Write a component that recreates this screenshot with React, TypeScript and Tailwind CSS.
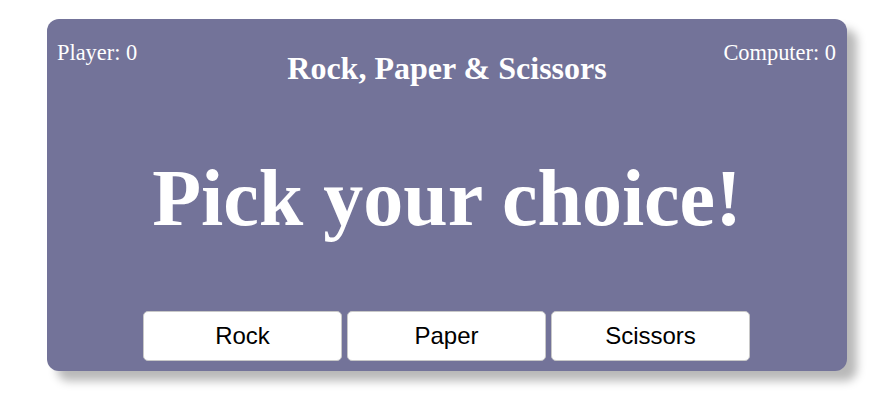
import React from "react";

export default function App() {
  return (
    <div className="w-[885px] h-[407px] bg-white pt-[19px] pl-[47px]">
      <div
        className="w-[800px] h-[352px] bg-[#737399] rounded-[12px] shadow-[10px_10px_10px_rgba(0,0,0,0.28)] px-[10px] flex flex-col text-white"
        style={{ fontFamily: '"Liberation Serif", "Times New Roman", serif' }}
      >
        <div className="grid grid-cols-[1fr_auto_1fr] items-start h-[65px]">
          <div className="mt-[23px] text-[22.4px] leading-[22px]">Player: 0</div>
          <div className="mt-[33px] text-[32px] leading-[32px] font-bold">Rock, Paper &amp; Scissors</div>
          <div className="mt-[23px] text-[22.4px] leading-[22px] text-right pr-[1px]">Computer: 0</div>
        </div>
        <div className="mt-[74px] text-center text-[80px] leading-[80px] font-bold">Pick your choice!</div>
        <div className="mt-[73px] flex justify-center gap-[5px] pr-[1px]">
          {["Rock", "Paper", "Scissors"].map((t) => (
            <button
              key={t}
              className="w-[199px] h-[50px] bg-white border border-[#c8c8c8] rounded-[5px] text-black text-[24px]"
              style={{ fontFamily: '"Liberation Sans", Arial, sans-serif' }}
            >
              {t}
            </button>
          ))}
        </div>
      </div>
    </div>
  );
}
